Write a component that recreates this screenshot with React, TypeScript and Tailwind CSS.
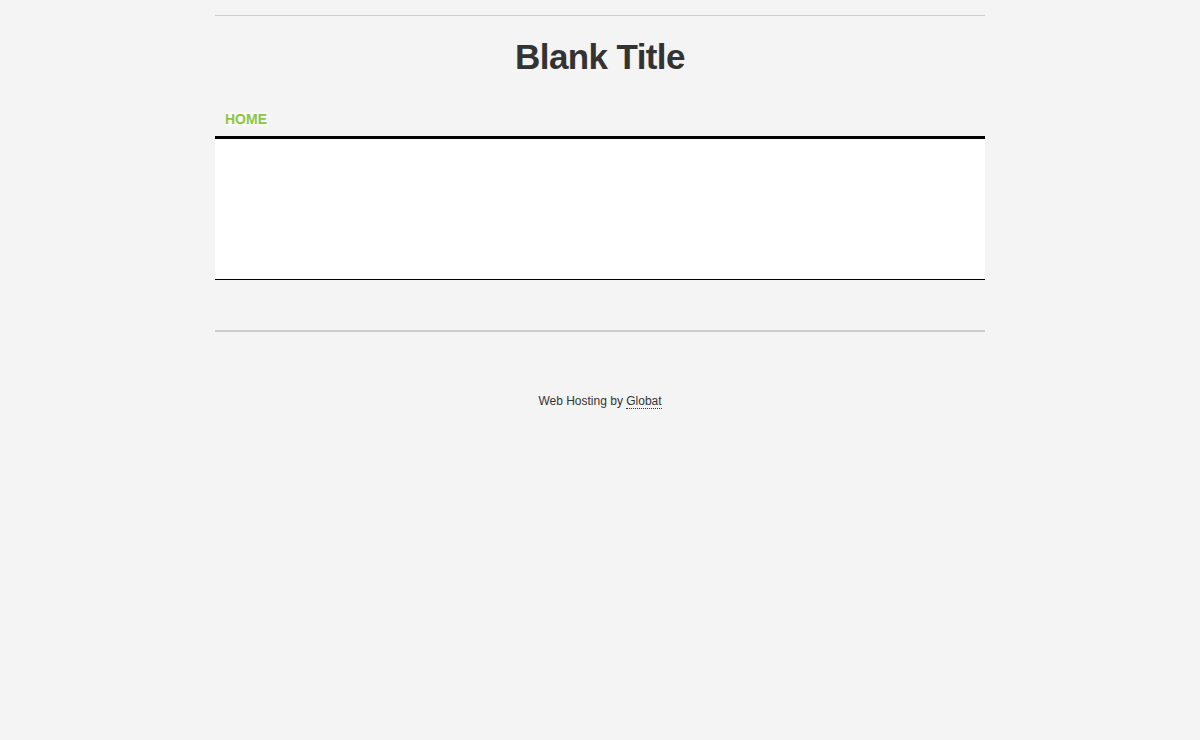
import React from 'react';

const App: React.FC = () => {
  return (
    <div className="min-h-screen bg-[#f4f4f4] pt-[15px]" style={{ fontFamily: '"Liberation Sans", Arial, sans-serif' }}>
      <div className="w-[770px] mx-auto">
        {/* header */}
        <div className="border-t border-[#cccccc]">
          <h1 className="h-[82px] flex items-center justify-center text-[35px] font-bold text-[#333333] tracking-[-0.6px]">
            Blank Title
          </h1>
        </div>

        {/* nav */}
        <div className="h-[38px] flex items-end pb-[10px] pl-[10px]">
          <a href="#" className="text-[14px] font-bold text-[#8dc63f] leading-none bg-[#fafafa]">HOME</a>
        </div>

        {/* content */}
        <div className="border-t-[3px] border-black bg-white h-[144px] border-b border-b-black" />

        {/* bottom rule */}
        <div className="h-[50px]" />
        <div className="border-t-2 border-[#cccccc]" />

        {/* footer */}
        <div className="pt-[60px] text-center text-[12px] text-[#333333]">
          Web Hosting by{' '}
          <a href="#" className="text-[#333333] border-b border-dotted border-[#333333]">Globat</a>
        </div>
      </div>
    </div>
  );
};

export default App;
